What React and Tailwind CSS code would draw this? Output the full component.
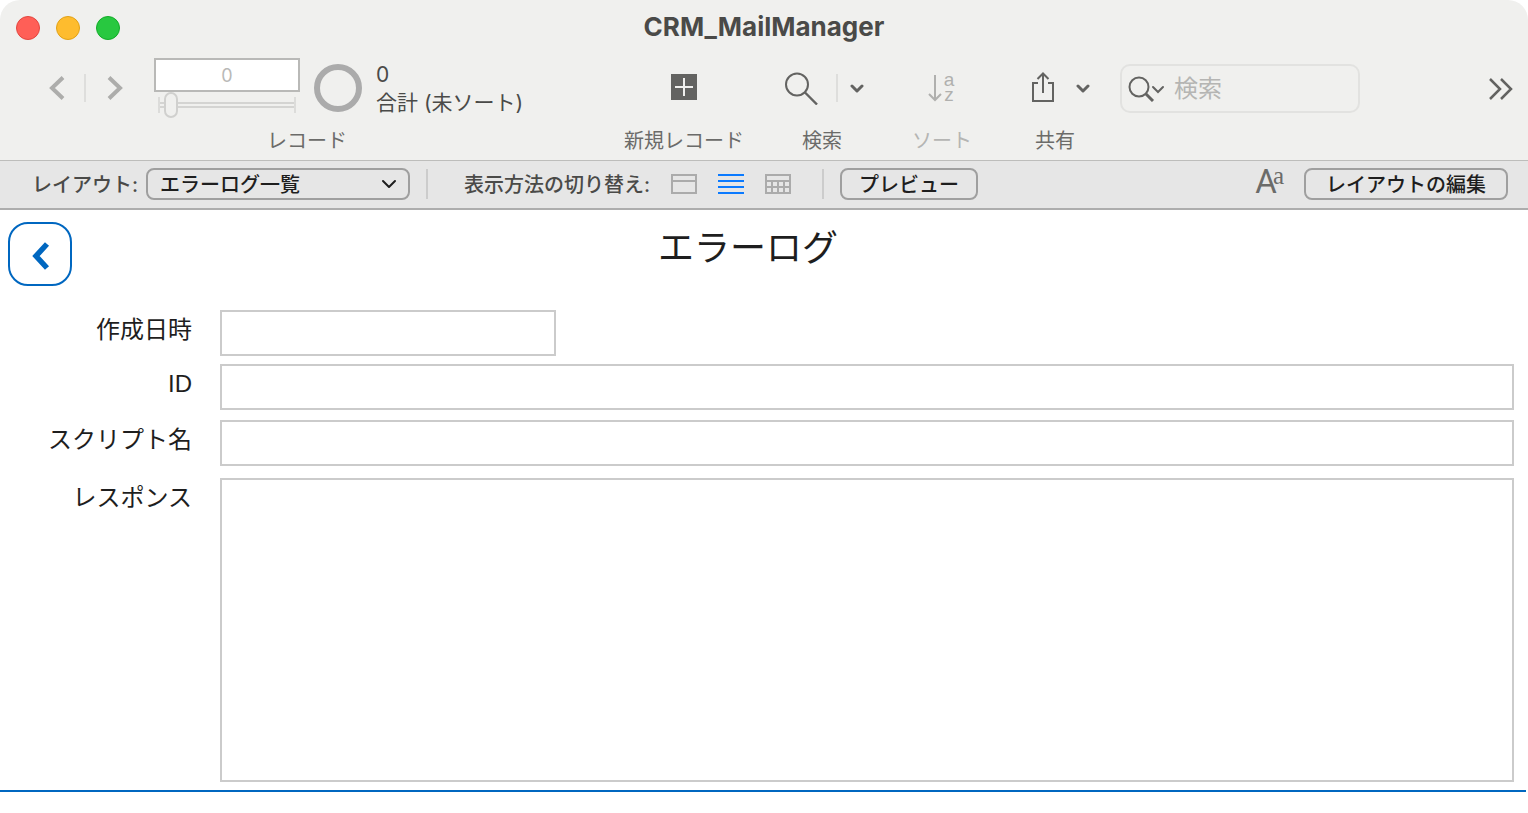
const VIEWS = [
  { id: 'form', label: 'フォーム形式', Icon: FormIcon, color: 'text-[#ababab]' },
  { id: 'list', label: 'リスト形式', Icon: ListIcon, color: 'text-[#0a7aff]' },
  { id: 'table', label: '表形式', Icon: TableIcon, color: 'text-[#ababab]' },
];

const FIELDS = [
  { id: 'created', label: '作成日時', row: '', width: 'w-[336px]' },
  { id: 'log-id', label: 'ID', row: 'mt-2', width: 'flex-1' },
  { id: 'script', label: 'スクリプト名', row: 'mt-[10px]', width: 'flex-1' },
  { id: 'response', label: 'レスポンス', row: 'mt-3', width: 'flex-1', multiline: true },
];

function FormIcon() {
  return (
    <svg width="26" height="20" fill="none" stroke="currentColor" strokeWidth="2">
      <path d="M1 1h24v18H1zM1 7h24" />
    </svg>
  );
}

function ListIcon() {
  return (
    <svg width="26" height="20" fill="none" stroke="currentColor" strokeWidth="2">
      <path d="M0 1h26M0 7h26M0 13h26M0 19h26" />
    </svg>
  );
}

function TableIcon() {
  return (
    <svg width="26" height="20" fill="none" stroke="currentColor" strokeWidth="2">
      <path d="M1 1h24v18H1zM1 7h24M1 13h24M7 7v12M13 7v12M19 7v12" />
    </svg>
  );
}

function ChevronDown() {
  return (
    <svg width="14" height="12" fill="none" stroke="currentColor" strokeWidth="3" strokeLinecap="round" strokeLinejoin="round">
      <path d="M2 4l5 5 5-5" />
    </svg>
  );
}

// Toolbar group: icon row on top, caption underneath.
function Tool({ label, className = '', labelClass = 'text-[#6b6b69]', children }) {
  return (
    <div className={`flex flex-col shrink-0 ${className}`}>
      <div className="h-16 flex items-center">{children}</div>
      <div className={`h-10 leading-[42px] text-center text-[20px] whitespace-nowrap ${labelClass}`}>{label}</div>
    </div>
  );
}

function TitleBar() {
  return (
    <div className="relative h-14">
      <div className="absolute left-4 top-4 flex gap-4">
        <button aria-label="閉じる" className="size-6 rounded-full bg-[#ff5f57] border border-[#e2463f]" />
        <button aria-label="しまう" className="size-6 rounded-full bg-[#febc2e] border border-[#e1a116]" />
        <button aria-label="拡大" className="size-6 rounded-full bg-[#28c840] border border-[#12ac28]" />
      </div>
      <h1 className="text-center text-[26px] leading-[54px] font-bold text-[#4a4a48]">CRM_MailManager</h1>
    </div>
  );
}

function Records() {
  return (
    <Tool label="レコード" className="w-[614px]">
      <button aria-label="前のレコード" className="ml-12 text-[#adadab]">
        <svg width="18" height="24" fill="none" stroke="currentColor" strokeWidth="4">
          <path d="M15 1.500L4 12l11 10.500" />
        </svg>
      </button>
      <div className="ml-[18px] mr-5 w-[2px] h-7 bg-[#dededc]" />
      <button aria-label="次のレコード" className="text-[#adadab]">
        <svg width="18" height="24" fill="none" stroke="currentColor" strokeWidth="4">
          <path d="M3 1.500L14 12 3 22.500" />
        </svg>
      </button>
      <div className="ml-[30px] w-[146px]">
        <input
          aria-label="レコード番号"
          defaultValue="0"
          className="block w-full h-[34px] border-2 border-[#b9b9b7] bg-white text-center text-[18px] text-[#b9b9b7] outline-none"
        />
        <div className="mx-1 h-[26px] flex items-center">
          <div className="w-full h-4 border-x-2 border-[#dcdcda] flex items-center">
            <input
              type="range"
              aria-label="レコード位置"
              defaultValue="3"
              className="w-full h-[26px] shrink-0 appearance-none bg-transparent [&::-webkit-slider-runnable-track]:h-[6px] [&::-webkit-slider-runnable-track]:border-y-2 [&::-webkit-slider-runnable-track]:border-[#d4d4d2] [&::-webkit-slider-thumb]:appearance-none [&::-webkit-slider-thumb]:w-[14px] [&::-webkit-slider-thumb]:h-[26px] [&::-webkit-slider-thumb]:-mt-3 [&::-webkit-slider-thumb]:rounded-full [&::-webkit-slider-thumb]:border-2 [&::-webkit-slider-thumb]:border-[#d0d0ce] [&::-webkit-slider-thumb]:bg-[#f0f0ee]"
            />
          </div>
        </div>
      </div>
      <div className="mx-[14px] size-12 rounded-full border-[6px] border-[#ababab]" />
      <div className="pt-[2px] text-[21px] leading-7 text-[#4a4a48] whitespace-nowrap">
        <div>0</div>
        <div>合計 (未ソート)</div>
      </div>
    </Tool>
  );
}

function Toolbar() {
  return (
    <div className="flex">
      <Records />
      <Tool label="新規レコード" className="ml-[10px] w-[120px]">
        <button aria-label="新規レコード" className="mx-auto">
          <svg width="26" height="28">
            <path d="M0 0h26v26H0z" fill="#636361" />
            <path d="M4 13h18M13 4v18" stroke="#f0f0ee" strokeWidth="2" />
          </svg>
        </button>
      </Tool>
      <Tool label="検索" className="ml-8 w-[92px]">
        <button aria-label="検索" className="ml-2 text-[#636361]">
          <svg width="34" height="34" fill="none" stroke="currentColor" strokeWidth="2">
            <circle cx="13" cy="13.5" r="11" />
            <path d="M21 21.500l12 12" strokeWidth="2.4" />
          </svg>
        </button>
        <div className="ml-[18px] w-[2px] h-7 bg-[#dededc]" />
        <button aria-label="検索オプション" className="ml-3 text-[#636361]">
          <ChevronDown />
        </button>
      </Tool>
      <Tool label="ソート" className="ml-11 w-[58px]" labelClass="text-[#b5b5b3]">
        <button aria-label="ソート" className="mx-auto flex items-center gap-[2px] text-[#b0b0ae]">
          <svg width="14" height="28" fill="none" stroke="currentColor" strokeWidth="2">
            <path d="M7 1v25M1 20l6 6 6-6" />
          </svg>
          <span className="flex flex-col pb-[2px] font-['Liberation_Sans',sans-serif] text-[19px] leading-[15px]">
            <span>a</span>
            <span>z</span>
          </span>
        </button>
      </Tool>
      <Tool label="共有" className="ml-[50px] w-[70px]">
        <button aria-label="共有" className="ml-3 text-[#636361]">
          <svg width="22" height="32" fill="none" stroke="currentColor" strokeWidth="2">
            <path d="M6 11H1v18h20V11h-5M11 21V2M5.500 7L11 1.500 16.500 7" />
          </svg>
        </button>
        <button aria-label="共有オプション" className="ml-[22px] text-[#636361]">
          <ChevronDown />
        </button>
      </Tool>
      <label className="ml-[30px] mt-2 w-60 h-[49px] shrink-0 flex items-center gap-2 px-[6px] border-2 border-[#e2e2e0] rounded-[10px]">
        <svg width="38" height="26" fill="none" stroke="#636361" strokeWidth="2" className="shrink-0">
          <circle cx="11" cy="11" r="9.500" />
          <path d="M18 18l7 7" strokeWidth="3" />
          <path d="M25 11l5 5 5-5" strokeLinecap="round" />
        </svg>
        <input
          type="search"
          aria-label="検索"
          placeholder="検索"
          className="w-full min-w-0 bg-transparent text-[24px] placeholder:text-[#b5b5b3] outline-none"
        />
      </label>
      <button aria-label="その他のツール" className="ml-auto mr-[14px] h-16 text-[#636361]">
        <svg width="26" height="24" fill="none" stroke="currentColor" strokeWidth="2.500">
          <path d="M2 3l10 10L2 23M13 3l10 10-10 10" />
        </svg>
      </button>
    </div>
  );
}

function LayoutBar() {
  return (
    <div className="h-[50px] flex items-center pb-[1px] bg-[#e6e6e6] border-t border-t-[#bdbdbb] border-b-2 border-b-[#adadad] text-[20px] font-medium text-[#4a4a48] whitespace-nowrap">
      <label htmlFor="layout" className="w-[146px] pt-[2px] pr-2 text-right">レイアウト:</label>
      <div className="relative">
        <select
          id="layout"
          className="block w-[264px] h-8 pt-[1px] pl-3 appearance-none border-2 border-[#9f9f9f] rounded-lg bg-transparent text-[#1e1e1e] leading-7 outline-none"
        >
          <option>エラーログ一覧</option>
        </select>
        <svg width="16" height="10" fill="none" stroke="#1e1e1e" strokeWidth="2" strokeLinecap="round" strokeLinejoin="round" className="absolute right-[13px] top-[11px] pointer-events-none">
          <path d="M2 2l6 6 6-6" />
        </svg>
      </div>
      <div className="ml-4 w-[2px] h-[30px] bg-[#cccccc]" />
      <span className="ml-9 w-[189px] pt-[2px]">表示方法の切り替え:</span>
      <div className="ml-[18px] flex gap-[21px]">
        {VIEWS.map(({ id, label, Icon, color }) => (
          <button key={id} aria-label={label} className={color}>
            <Icon />
          </button>
        ))}
      </div>
      <div className="ml-[31px] w-[2px] h-[30px] bg-[#cccccc]" />
      <button className="ml-4 w-[138px] h-8 pt-[1px] leading-7 border-2 border-[#9f9f9f] rounded-lg text-[#1e1e1e]">プレビュー</button>
      <button aria-label="書式設定バー" className="ml-auto mr-5 pb-1 flex items-start font-normal text-[#6b6b69]">
        <span className="font-['Roboto',sans-serif] text-[33px] leading-9">A</span>
        <span className="-ml-1 font-['Liberation_Serif',serif] text-[25px] leading-6">a</span>
      </button>
      <button className="mr-5 w-[204px] h-8 pt-[1px] leading-7 border-2 border-[#9f9f9f] rounded-lg text-[#1e1e1e]">レイアウトの編集</button>
    </div>
  );
}

function Field({ id, label, row, width, multiline }) {
  const box = `block min-w-0 border-2 border-[#cbcbcb] bg-white px-2 text-[24px] outline-none ${width}`;
  return (
    <div className={`flex items-start gap-7 ${row}`}>
      <label htmlFor={id} className="w-48 shrink-0 text-right text-[24px] leading-[39px] text-[#1e1e1e]">{label}</label>
      {multiline ? (
        <textarea id={id} className={`${box} h-[304px] resize-none`} />
      ) : (
        <input id={id} className={`${box} h-[46px]`} />
      )}
    </div>
  );
}

export default function App() {
  return (
    <div className="bg-white font-['Inter','Noto_Sans_CJK_JP',sans-serif]">
      <header className="bg-[#f0f0ee] rounded-t-[20px] overflow-hidden">
        <TitleBar />
        <Toolbar />
        <LayoutBar />
      </header>
      <main className="font-['Liberation_Sans','Noto_Sans_CJK_JP',sans-serif]">
        <div className="flex items-start pt-3 pl-2">
          <button aria-label="戻る" className="size-16 shrink-0 flex items-center justify-center border-2 border-[#0067c0] rounded-[20px]">
            <svg width="20" height="32" fill="none" stroke="#0067c0" strokeWidth="5.500">
              <path d="M17 6L6 18l11 12" />
            </svg>
          </button>
          <h2 className="flex-1 pr-[104px] text-center text-[36px] leading-[54px] text-[#1e1e1e]">エラーログ</h2>
        </div>
        <form className="mt-6 pr-[14px]">
          {FIELDS.map((f) => (
            <Field key={f.id} {...f} />
          ))}
        </form>
        <hr className="mt-2 mr-[2px] border-t-2 border-[#0067c0]" />
      </main>
    </div>
  );
}
